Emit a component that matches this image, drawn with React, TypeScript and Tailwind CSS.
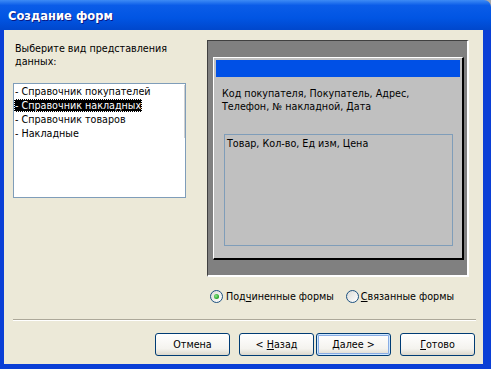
import React from "react";

const font = "font-['Tahoma','DejaVu_Sans',sans-serif] text-[9.6px] leading-[13px] text-black";

interface XpButtonProps {
	label: React.ReactNode;
	focused?: boolean;
}

const XpButton: React.FC<XpButtonProps> = ({ label, focused = false }) => (
	<div
		className={`flex h-[23px] w-[75px] items-center justify-center rounded-[3px] border border-[#003c74] bg-[linear-gradient(to_bottom,#ffffff,#f4f3ee_70%,#dcd8cc)] ${
			focused ? "shadow-[inset_0_0_0_1px_#cee7ff,inset_0_0_0_2px_#89ade4]" : ""
		}`}
	>
		<span className={font}>{label}</span>
	</div>
);

const Radio: React.FC<{ checked?: boolean }> = ({ checked = false }) => (
	<span className="flex h-[13px] w-[13px] items-center justify-center rounded-full border border-[#1c5180] bg-[linear-gradient(135deg,#dcdcd7,#ffffff)]">
		{checked && (
			<span className="h-[5px] w-[5px] rounded-full bg-[radial-gradient(circle_at_40%_40%,#8ee78e,#21a121_70%)]" />
		)}
	</span>
);

const items = [
	"- Справочник покупателей",
	"- Справочник накладных",
	"- Справочник товаров",
	"- Накладные",
];

export default function App() {
	return (
		<div className="flex h-[369px] w-[491px] flex-col bg-[#a9a9a9]">
			{/* title bar */}
			<div className="flex h-[30px] shrink-0 items-center rounded-tr-[7px] bg-[linear-gradient(to_bottom,#3d8bf5,#0a5ce8_18%,#0155e3_60%,#0047cc)] pt-[4px] pl-[8px]">
				<span className="font-['Trebuchet_MS','DejaVu_Sans',sans-serif] font-bold text-[11.5px] text-white [text-shadow:1px_1px_#0a1883]">
					Создание форм
				</span>
			</div>

			{/* body */}
			<div className="flex flex-1 flex-col border-[#0a3fd6] border-r-[8px] border-b-[5px] border-l-[4px] bg-[#ece9d8]">
				<div className="flex pt-[10px]">
					<div className="ml-[9px] flex w-[173px] flex-col">
						<div className={`${font} mt-[2px] ml-[2px]`}>
							Выберите вид представления
							<br />
							данных:
						</div>
						<div className="relative mt-[15px] h-[115px] border border-[#7f9db9] bg-white">
							{items.map((item, i) => (
								<div key={item} className="flex h-[14px] items-center">
									<span
										className={`${font} px-[1px] whitespace-nowrap ${
											i === 1
												? "bg-black text-white outline-1 outline-white outline-dotted -outline-offset-1"
												: ""
										}`}
									>
										{item}
									</span>
								</div>
							))}
							<div className="absolute top-[1px] right-0 h-[53px] w-px bg-[#d0d0d0]" />
						</div>
					</div>

					{/* preview */}
					<div className="ml-[21px] flex h-[237px] w-[262px] flex-col border-[#404040] border-t border-l border-r-2 border-b-2 border-r-white border-b-white bg-[#808080] pt-[16px] pr-[3px] pb-[15px] pl-[5px]">
						<div className="flex flex-1 flex-col border-white border-t border-l border-r-2 border-b-2 border-r-black border-b-black bg-[#c0c0c0] p-[2px]">
							<div className="h-[17px] bg-[#0050e6]" />
							<div className={`${font} mt-[10px] ml-[6px]`}>
								Код покупателя, Покупатель, Адрес,
								<br />
								Телефон, № накладной, Дата
							</div>
							<div className="mt-[21px] ml-[8px] h-[112px] w-[229px] border border-[#7f9db9] pt-[2px] pl-[2px]">
								<div className={font}>Товар, Кол-во, Ед изм, Цена</div>
							</div>
						</div>
					</div>
				</div>

				{/* radios */}
				<div className="mt-[12px] ml-[206px] flex h-[14px] items-center">
					<Radio checked />
					<span className={`${font} ml-[3px]`}>
						Под<span className="underline">ч</span>иненные формы
					</span>
					<span className="ml-[12px]" />
					<Radio />
					<span className={`${font} ml-[2px]`}>
						<span className="underline">С</span>вязанные формы
					</span>
				</div>

				{/* separator */}
				<div className="mt-[16px] ml-[9px] w-[463px] border-[#aca899] border-t border-b border-b-white" />

				{/* buttons */}
				<div className="mt-[12px] flex justify-end pr-[8px]">
					<XpButton label="Отмена" />
					<div className="ml-[9px]">
						<XpButton
							label={
								<>
									&lt; <span className="underline">Н</span>азад
								</>
							}
						/>
					</div>
					<div className="ml-[2px]">
						<XpButton
							focused
							label={
								<>
									<span className="underline">Д</span>алее &gt;
								</>
							}
						/>
					</div>
					<div className="ml-[9px]">
						<XpButton
							label={
								<>
									<span className="underline">Г</span>отово
								</>
							}
						/>
					</div>
				</div>
			</div>
		</div>
	);
}
